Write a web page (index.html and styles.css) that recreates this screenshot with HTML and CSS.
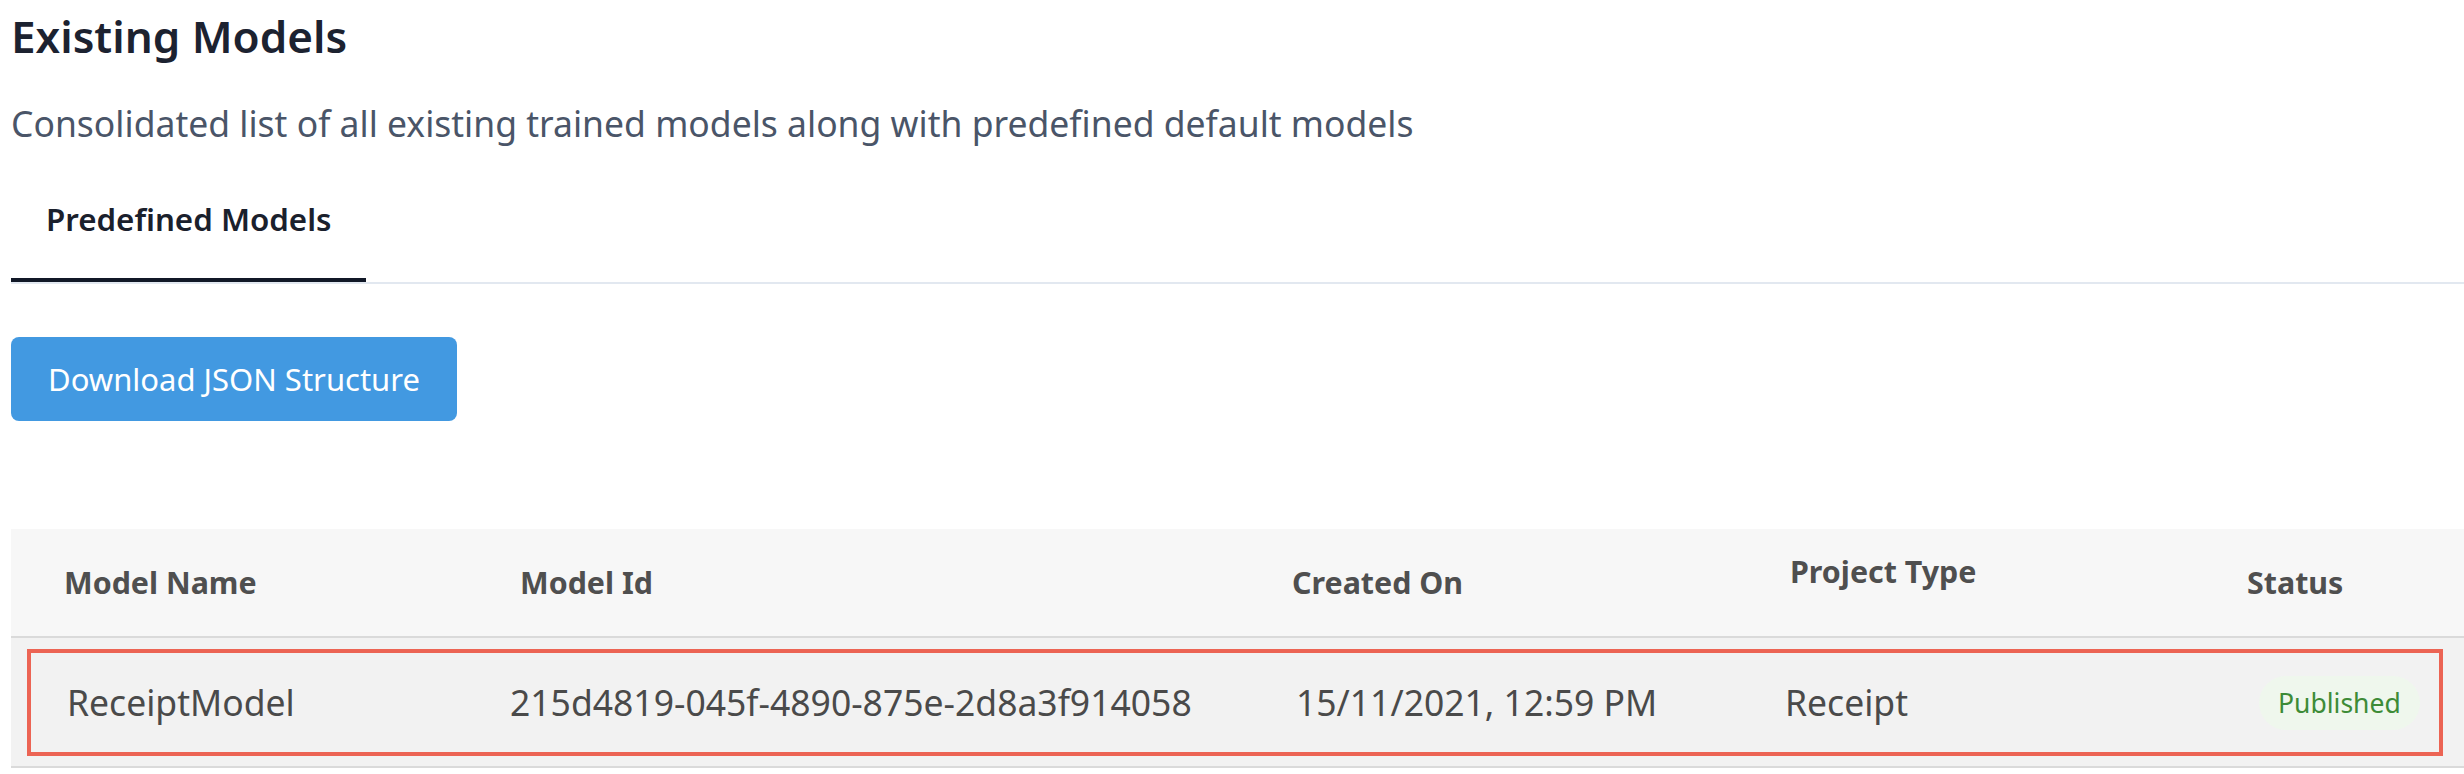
FILE: index.html
```html
<!DOCTYPE html>
<html lang="en">
<head>
<meta charset="utf-8">
<title>Existing Models</title>
<link rel="stylesheet" href="styles.css">
</head>
<body>
<main class="page">
  <h1 class="title">Existing Models</h1>
  <p class="subtitle">Consolidated list of all existing trained models along with predefined default models</p>
  <nav class="tabs">
    <div class="tab tab--active">Predefined Models</div>
  </nav>
  <div class="actions">
    <button class="btn" type="button">Download JSON Structure</button>
  </div>
  <div class="table">
    <div class="thead">
      <div class="th">Model Name</div>
      <div class="th">Model Id</div>
      <div class="th">Created On</div>
      <div class="th th--raised">Project Type</div>
      <div class="th">Status</div>
    </div>
    <div class="tbody">
      <div class="tr">
        <div class="td">ReceiptModel</div>
        <div class="td">215d4819-045f-4890-875e-2d8a3f914058</div>
        <div class="td">15/11/2021, 12:59 PM</div>
        <div class="td">Receipt</div>
        <div class="td"><span class="badge">Published</span></div>
        <span class="highlight"></span>
      </div>
    </div>
  </div>
</main>
</body>
</html>
```

FILE: styles.css
```css
* { box-sizing: border-box; }

body {
  margin: 0;
  background: #ffffff;
}

.page {
  padding: 0 0 0 11px;
  font-family: "Noto Sans", "Open Sans", sans-serif;
}

.title {
  margin: 0;
  font-size: 44px;
  line-height: 72px;
  font-weight: 650;
  color: #1c2230;
}

.subtitle {
  margin: 26px 0 0;
  font-size: 35.5px;
  line-height: 50px;
  color: #4a5568;
}

.tabs {
  display: flex;
  border-bottom: 2px solid #e2e8f0;
}

.tab {
  padding: 49px 35px 37px;
  font-size: 31.3px;
  line-height: 44px;
  font-weight: 600;
  color: #1a202c;
}

.tab--active {
  border-bottom: 4px solid #111827;
}

.actions {
  margin-top: 53px;
}

.btn {
  font-family: inherit;
  font-size: 31px;
  line-height: 84px;
  height: 84px;
  padding: 0 37px;
  background: #4299e1;
  color: #ffffff;
  border: 0;
  border-radius: 8px;
  cursor: pointer;
}

.table {
  margin-top: 108px;
}

.thead {
  display: grid;
  grid-template-columns: 456px 772px 498px 457px 1fr;
  align-items: center;
  height: 109px;
  padding-left: 53px;
  background: #f7f7f7;
  border-bottom: 2px solid #dadada;
}

.th {
  font-size: 30.4px;
  line-height: 40px;
  font-weight: 700;
  color: #4f4f4f;
}

.th--raised {
  padding-bottom: 22px;
}

.tr {
  position: relative;
  display: grid;
  grid-template-columns: 443px 786px 489px 474px 1fr;
  align-items: center;
  height: 130px;
  padding-left: 56px;
  background: #f2f2f2;
  border-bottom: 2px solid #dadada;
}

.td {
  font-size: 35.5px;
  line-height: 48px;
  color: #4a4a4a;
  white-space: nowrap;
}

.badge {
  display: inline-block;
  height: 54px;
  padding: 0 19px;
  border-radius: 27px;
  background: #eff7ed;
  color: #3d8b37;
  font-size: 26.5px;
  line-height: 54px;
}

.highlight {
  position: absolute;
  left: 16px;
  right: 21px;
  top: 11px;
  bottom: 10px;
  border: 4px solid #ec6454;
  pointer-events: none;
}
```
